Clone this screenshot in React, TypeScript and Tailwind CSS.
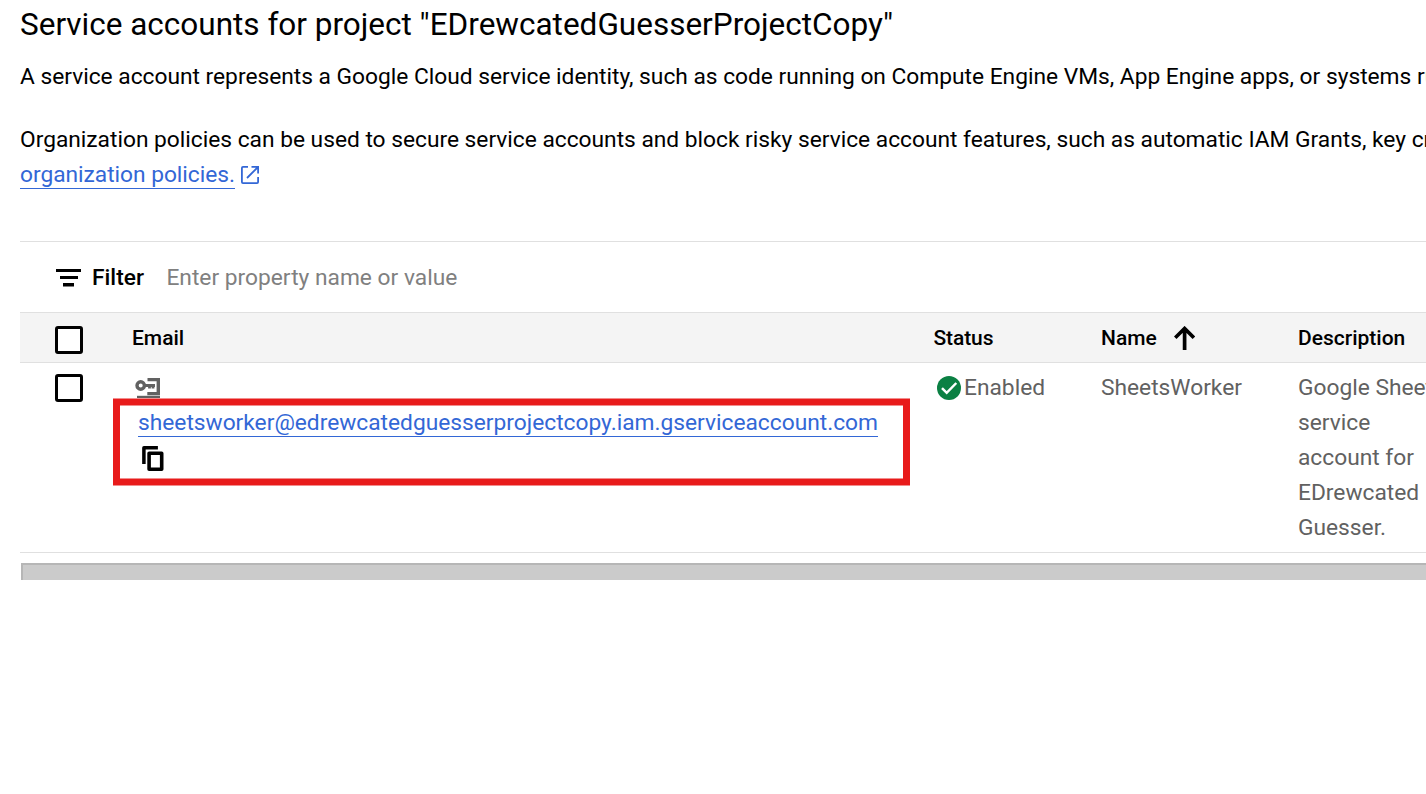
import type { ReactNode } from "react";

const COLS = "grid grid-cols-[112px_801.5px_167.5px_197px_200px]";

function Checkbox() {
  return <span className="block size-7 rounded-[3px] border-3 border-black bg-white" />;
}

function HeaderCell({ children }: { children: ReactNode }) {
  return <div className="flex items-center text-[21px] font-medium text-black">{children}</div>;
}

function OpenInNewIcon() {
  return (
    <svg viewBox="0 0 18 18" className="ml-[6px] size-[18px] shrink-0" fill="none" stroke="#3367d6" strokeWidth="1.8">
      <path d="M7 .9H2Q.9.9.9 2v14q0 1.1 1.1 1.1h14q1.1 0 1.1-1.1v-5" />
      <path d="M10.5.9h6.6v6.6M17 1 6 12" />
    </svg>
  );
}

function FilterIcon() {
  return (
    <svg viewBox="0 0 25 18" className="mt-[2px] h-[18px] w-[25px]" fill="#000">
      <path d="M0 0h25v3H0zM4 7h18v3H4zM7 14h11v3.5H7z" />
    </svg>
  );
}

function KeyIcon() {
  return (
    <svg viewBox="0 0 25 21" className="h-[21px] w-[25px]" fill="none" stroke="#616161">
      <circle cx="5.7" cy="7.5" r="3.7" strokeWidth="3.4" />
      <path d="M9 7.5h11M14.5 7.5v3M18 7.5v3" strokeWidth="2.8" />
      <path d="M12.5 1.6h10.8v14h-11" strokeWidth="3.4" />
      <path d="M2 19.8h23" strokeWidth="4" />
    </svg>
  );
}

function CopyIcon() {
  return (
    <svg viewBox="0 0 22 25" className="h-[25px] w-[22px]" fill="none" stroke="#000" strokeLinejoin="round">
      <path d="M1.9 18V1.8h14" strokeWidth="3.5" />
      <path d="M7.1 7.3h12.6v15.9H7.1z" strokeWidth="3.6" />
    </svg>
  );
}

function ArrowUpIcon() {
  return (
    <svg viewBox="0 0 21 24" className="ml-[17px] h-6 w-[21px]" fill="none" stroke="#000" strokeWidth="3.7">
      <path d="M10.6 24V3M1.2 11.8l9.4-9.3 9.3 9.3" />
    </svg>
  );
}

function EnabledIcon() {
  return (
    <svg viewBox="0 0 24 24" className="size-6">
      <circle cx="12" cy="12" r="12" fill="#0b8043" />
      <path d="m5 12.2 4.7 4.6L19.3 7" fill="none" stroke="#fff" strokeWidth="2.5" />
    </svg>
  );
}

export default function App() {
  return (
    <div className="h-[794px] w-full overflow-hidden bg-white pl-5 font-['Roboto',sans-serif] text-[22.75px] leading-[35px] text-black">
      <h1 className="whitespace-nowrap pt-[5px] text-[31.5px] leading-[40px] tracking-[-0.005px]">
        Service accounts for project "EDrewcatedGuesserProjectCopy"
      </h1>
      <p className="mt-[14px] whitespace-nowrap tracking-[-0.008px]">
        A service account represents a Google Cloud service identity, such as code running on Compute Engine VMs, App
        Engine apps, or systems running outside Google.
      </p>
      <p className="mt-7 whitespace-nowrap tracking-[-0.009px]">
        Organization policies can be used to secure service accounts and block risky service account features, such as
        automatic IAM Grants, key creation/upload
      </p>
      <div className="flex h-[35px] items-start">
        <a className="h-[32px] border-b border-[#3367d6] leading-[36px] tracking-[-0.03px] text-[#3367d6]">
          organization policies.
        </a>
        <div className="flex h-[35px] items-center">
          <OpenInNewIcon />
        </div>
      </div>

      <section className="mt-[49px] w-[1478px] border-t border-[#e0e0e0]">
        <div className="flex h-[70px] items-center pl-9">
          <FilterIcon />
          <span className="ml-[11px] font-medium">Filter</span>
          <span className="ml-[22.5px] text-[#808080]">Enter property name or value</span>
        </div>

        <div className={`${COLS} h-[51px] border-y border-[#e0e0e0] bg-[#f4f4f4]`}>
          <div className="flex items-center pl-[35px] pt-[5px]">
            <Checkbox />
          </div>
          <HeaderCell>
            <span className="mt-[2px]">Email</span>
          </HeaderCell>
          <HeaderCell>
            <span className="mt-[2px] tracking-[-0.1px]">Status</span>
          </HeaderCell>
          <HeaderCell>
            <span className="mt-[2px]">Name</span>
            <ArrowUpIcon />
          </HeaderCell>
          <HeaderCell>
            <span className="mt-[2px]">Description</span>
          </HeaderCell>
        </div>

        <div className={`${COLS} h-[190px] border-b border-[#e0e0e0] pt-[7px] text-[#616161]`}>
          <div className="pl-[35px] pt-1">
            <Checkbox />
          </div>
          <div className="relative">
            <div className="pl-[3px] pt-2">
              <KeyIcon />
            </div>
            <div className="pl-[6px] pt-[5px]">
              <a className="inline-block h-[33px] whitespace-nowrap border-b border-[#3367d6] align-top leading-[37px] tracking-[-0.005px] text-[#3367d6]">
                sheetsworker@edrewcatedguesserprojectcopy.iam.gserviceaccount.com
              </a>
            </div>
            <div className="pl-[10px] pt-[7px]">
              <CopyIcon />
            </div>
            <div className="absolute -left-[19px] top-[29px] h-[86px] w-[797px] border-x-7 border-y-6 border-[#e81b1b] shadow-[0_-1px_0_#f28d8d,0_1px_0_#f28d8d,inset_0_1px_0_#f28d8d,inset_0_-1px_0_#f28d8d]" />
          </div>
          <div className="flex h-[35px] items-center pl-[3.5px]">
            <EnabledIcon />
            <span className="ml-[3px]">Enabled</span>
          </div>
          <div>SheetsWorker</div>
          <div className="whitespace-nowrap">
            Google Sheets
            <br />
            service
            <br />
            account for
            <br />
            EDrewcated
            <br />
            Guesser.
          </div>
        </div>
        <div className="ml-px mt-[10px] h-[17px] border-l-2 border-t-2 border-[#b6b6b6] bg-[#cbcbcb]" />
      </section>
    </div>
  );
}
